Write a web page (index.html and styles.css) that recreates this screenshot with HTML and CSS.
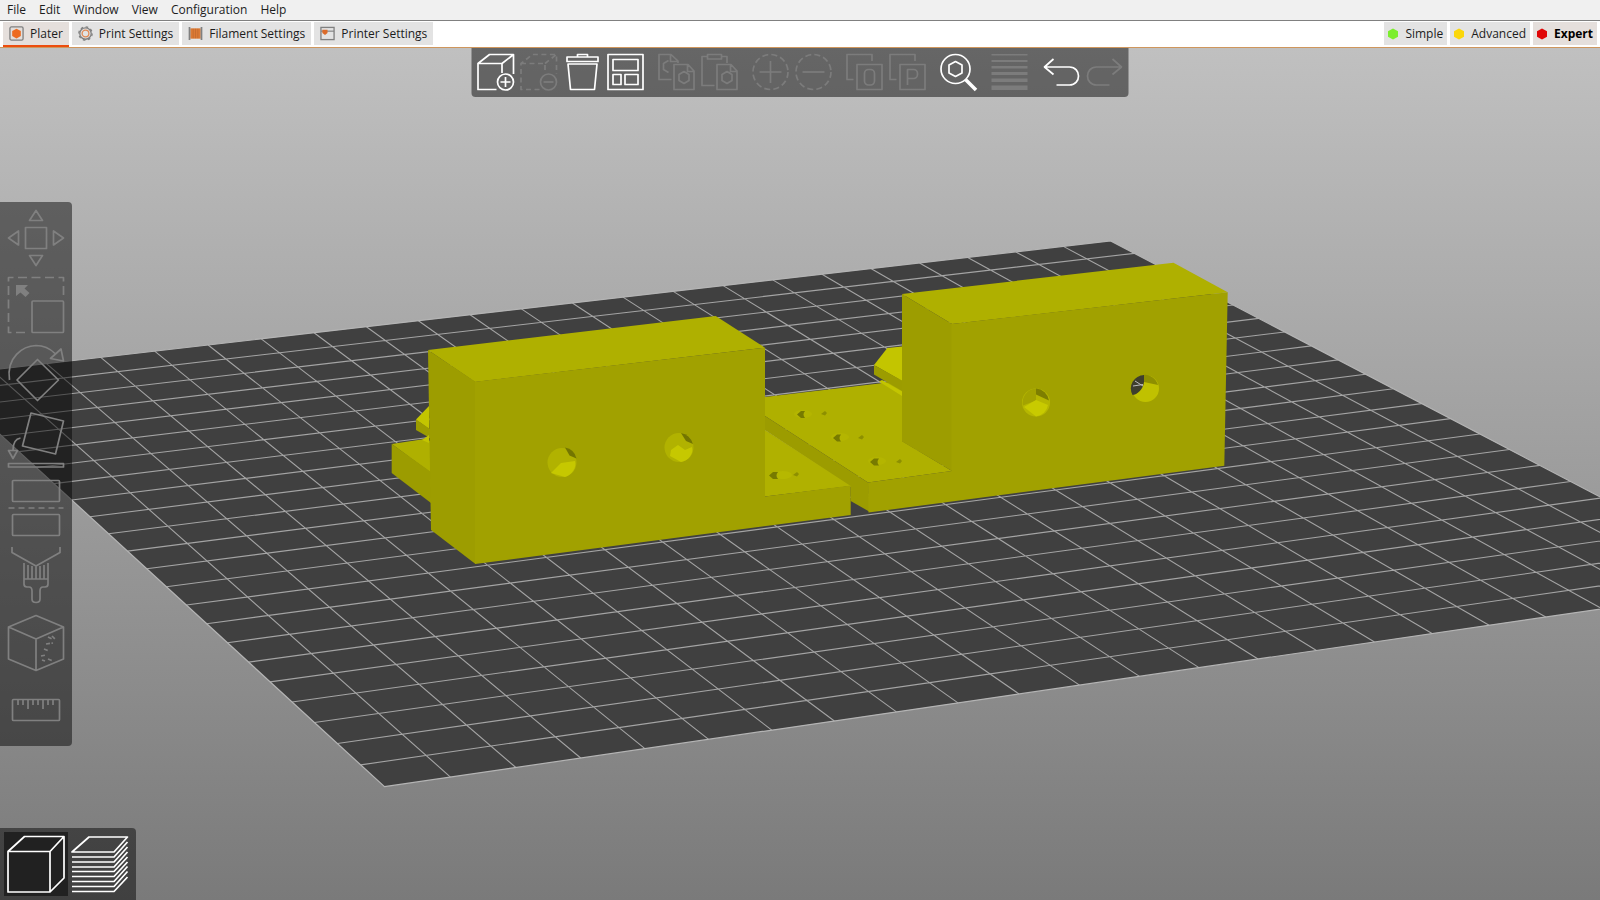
FILE: index.html
```html
<!DOCTYPE html>
<html lang="en">
<head>
<meta charset="utf-8">
<title>Plater</title>
<link rel="stylesheet" href="styles.css">
</head>
<body>
<div class="app">
  <nav class="menubar" aria-label="Main menu">
    <button>File</button><button>Edit</button><button>Window</button><button>View</button><button>Configuration</button><button>Help</button>
  </nav>

  <header class="tabbar">
    <div class="tabs">
      <button class="tab active"><svg viewBox="0 0 16 16"><rect x="1" y="1" width="14" height="14" rx="1.5" fill="#e3dedb" stroke="#808080" stroke-width="1.4"/><path d="M8 2.8 12.6 5.4v5.2L8 13.2 3.4 10.6V5.4z" fill="#ed6b21"/></svg>Plater</button>
      <button class="tab"><svg viewBox="0 0 16 16" fill="none"><circle cx="8" cy="8" r="6.1" stroke="#808080" stroke-width="1.4"/><circle cx="8" cy="8" r="7.1" stroke="#808080" stroke-width="1.4" stroke-dasharray="2.8 2.77"/><circle cx="8" cy="8" r="3.6" stroke="#e08a55" stroke-width="1.4"/></svg>Print Settings</button>
      <button class="tab"><svg viewBox="0 0 16 16"><path d="M2.5 2.5h11v11h-11z" fill="#dc7a35"/><path d="M5.5 3v10M8 3v10M10.5 3v10" stroke="#c0692d" stroke-width=".8"/><path d="M1.6 1v14M14.4 1v14" stroke="#808080" stroke-width="1.8"/></svg>Filament Settings</button>
      <button class="tab"><svg viewBox="0 0 16 16"><rect x="1" y="1.5" width="14" height="13" fill="none" stroke="#808080" stroke-width="1.4"/><path d="M1 5.5h14" stroke="#808080" stroke-width="1.2"/><path d="M2.500 4h5.500v3.500L5.300 9.500 2.500 7.500z" fill="#dc6b2a"/></svg>Printer Settings</button>
    </div>
    <div class="modes">
      <button class="mode"><svg viewBox="0 0 12 12"><path d="M6 .5 11 3.300v5.400L6 11.500 1 8.700V3.300z" fill="#7cee2e"/></svg>Simple</button>
      <button class="mode"><svg viewBox="0 0 12 12"><path d="M6 .5 11 3.300v5.400L6 11.500 1 8.700V3.300z" fill="#fbd70a"/></svg>Advanced</button>
      <button class="mode active"><svg viewBox="0 0 12 12"><path d="M6 .5 11 3.300v5.400L6 11.500 1 8.700V3.300z" fill="#e00606"/></svg>Expert</button>
    </div>
  </header>

  <main class="viewport">
    <svg class="scene" viewBox="0 48 1600 852" preserveAspectRatio="xMidYMid slice" role="img" aria-label="Print bed with two brackets">
      <path id="bed" fill="#404040"/>
      <path id="grid" fill="none" stroke="#a4a4a4" stroke-width="1.100"/>
      <path id="edge" fill="none" stroke="#b4b4b4" stroke-width="1.200"/>

      <g>
        <path fill="#afb000" d="M765 397 879 383.500 902 380 902 441 952 471 868 482.500 765 416z"/>
        <path fill="#9c9c00" d="M765 416 868 482.500 870 512 850.700 501 850.700 487 765 430z"/>
        <path fill="#c3c500" d="M874 365 887.300 348 902 346.500V381z"/>
        <path fill="#9c9c00" d="M874 365 902 380.500V391L874 374.500z"/>
        <path fill="#c3c500" d="M879 381.500 882 380 902 391.500V396z"/>
        <path fill="#afb000" d="M902 294 1173.500 262.700 1227.700 292.300 952 324z"/>
        <path fill="#9d9d00" d="M902 294 952 324V471L902 441.500z"/>
        <path fill="#a1a100" d="M951.500 324 1227.700 292.300 1224.300 465.700 868.500 512.500 868 482.500 951.500 471z"/>
        <path fill="#b4b500" d="M812 414a9 4 0 1 0 0 .1zM849 437a9 4 0 1 0 0 .1zM886 461a9 4 0 1 0 0 .1z"/>
        <path fill="#777a00" d="M797 414.500 801 411h4c-2 2-2 5 0 7h-4zM833 438 837 434.500h4c-2 2-2 5 0 7h-4zM870 462 874 458.500h5c-2 2-2 5 0 7h-5z"/>
        <path fill="#8d8f00" d="M821 414l4-3 2 2-2 2.500zM858 438l4-3 2 2-2 2.500zM896 462l4-3 2 2-2 2.500z"/>
      </g>
      <g>
        <circle cx="1036" cy="402.500" r="14" fill="#b6b700"/>
        <path fill="#7d7e00" d="M1036 388.500a14 14 0 0 1 13 12l-13-6z"/>
        <path fill="#a3a300" d="M1036 388.500v12l-13 5a14 14 0 0 1 13-17z"/>
        <path fill="#c8ca00" d="M1024 407l12-7 12 5a14 14 0 0 1-12 11.500z"/>
        <circle cx="1145.500" cy="388.500" r="13.500" fill="#c0c100"/>
        <path fill="#8e8f00" d="M1143 375a13.500 13.500 0 0 1 15 10l-14-3z"/>
        <path fill="#3e3e2e" d="M1144 375v7c-1 6-4 10-9 12.500l-2.500.5a13.500 13.500 0 0 1 11.500-20z"/>
        <path fill="none" stroke="#bcbcbc" stroke-width="1" d="M1133 386l10-1.500M1135 381l8 5"/>
      </g>

      <g>
        <path fill="#afb000" d="M391.700 444 423 439.300 431 441V473z"/>
        <path fill="#9c9c00" d="M391.700 444 431 472V503L391.700 473z"/>
        <path fill="#c3c500" d="M416 419.500 429 406V429z"/>
        <path fill="#9c9c00" d="M416 419.500 430 429V438L416 430z"/>
        <path fill="#c3c500" d="M422 440 429 435V443z"/>
        <path fill="#b0b100" d="M765 430 850.700 486 765 496.500z"/>
        <path fill="#afb000" d="M428 350 715.700 316 765 347.700 475 382z"/>
        <path fill="#9d9d00" d="M428 350 475.500 381.700V564L431 530z"/>
        <path fill="#a1a100" d="M475 381.700 765 347.700V496.500L850.700 485.500V515L475 564z"/>
        <path fill="#b6b800" d="M792 475a9 4 0 1 0 0 .1z"/>
        <path fill="#777a00" d="M769 475.500 773 472h5c-2 2-2 5 0 7h-5z"/>
        <path fill="#8d8f00" d="M793 475l4-3 2 2-2 2.500z"/>
        <circle cx="562" cy="462.500" r="14.500" fill="#b1b200"/>
        <path fill="#737500" d="M565 447.500a14.500 14.500 0 0 1 11.500 11l-7-3z"/>
        <path fill="#c6c800" d="M561 463l14-2c2 6-3 14-10 16l-14-4z"/>
        <circle cx="679" cy="447.500" r="14.500" fill="#b1b200"/>
        <path fill="#737500" d="M681 433a14.500 14.500 0 0 1 12 11l-7-3z"/>
        <path fill="#c6c800" d="M671 450l7-5 7 5 7-3c2 7-4 14-11 15l-11-6z"/>
      </g>
    </svg>

    <div class="toolbar">
      <div class="group">
        <button class="tool on" aria-label="Add"><svg viewBox="1 0 38 38"><path d="M20 36.500H1.500v-26L13 1.500h24V21M1.500 10.500h24V20M25.500 10.500 37 1.500"/><circle cx="29" cy="29" r="8"/><path d="M29 24v10M24 29h10"/></svg></button>
        <button class="tool" aria-label="Delete"><svg viewBox="1 0 38 38"><path stroke-dasharray="5 3.500" d="M20 36.500H1.500v-26L13 1.500h24V21M1.500 10.500h24V20M25.500 10.500 37 1.500"/><circle cx="29" cy="29" r="8"/><path d="M24 29h10"/></svg></button>
        <button class="tool on" aria-label="Delete all"><svg viewBox="0 0 38 38"><path d="M3.500 4h31v4.500h-31zM14 4V1.500h10V4M4.500 11 7 36.500h24L33.500 11z"/></svg></button>
        <button class="tool on" aria-label="Arrange"><svg viewBox="0 0 38 38"><path d="M1.500 1.500h35v35h-35zM6.500 6.500h25v11h-25zM6.500 21.500h8v10h-8zM18.500 21.500h13v10h-13z"/></svg></button>
      </div>
      <div class="group">
        <button class="tool" aria-label="Copy"><svg viewBox="0 0 38 38"><path d="M14 26.500H1.500v-25h12l7 6.500v2M13 2v6.500h7M11 19.500l-5-3v-6l5-3M16.500 11.500h14l6 6.500v18.500h-20zM30 12v6.500h6M26.500 18.500l5 3v6l-5 3-5-3v-6z"/></svg></button>
        <button class="tool" aria-label="Paste"><svg viewBox="0 0 38 38"><path d="M14 32.500H1.500v-29H7M21 3.500h5.500V10M7 1.500h14V6H7zM16.500 11.500h14l6 6.500v18.500h-20zM30 12v6.500h6M26.500 18.500l5 3v6l-5 3-5-3v-6z"/></svg></button>
      </div>
      <div class="group">
        <button class="tool" aria-label="Add instance"><svg viewBox="0 0 38 38"><circle cx="19" cy="19" r="17.500" stroke-dasharray="6 3.200"/><path d="M8 19h22M19 8v22"/></svg></button>
        <button class="tool" aria-label="Remove instance"><svg viewBox="0 0 38 38"><circle cx="19" cy="19" r="17.500" stroke-dasharray="6 3.200"/><path d="M8 19h22"/></svg></button>
      </div>
      <div class="group">
        <button class="tool" aria-label="Split to objects"><svg viewBox="0 0 38 38"><path d="M8 26.500H1.500v-25h25V8M11.500 11.500h25v25h-25z"/><rect x="19" y="16.500" width="10" height="15.500" rx="4"/></svg></button>
        <button class="tool" aria-label="Split to parts"><svg viewBox="0 0 38 38"><path d="M8 26.500H1.500v-25h25V8M11.500 11.500h25v25h-25zM19 32V16.500h6a4 4 0 0 1 4 4v1a4 4 0 0 1-4 4h-6"/></svg></button>
      </div>
      <div class="group">
        <button class="tool on" aria-label="Search"><svg viewBox="0 0 38 38"><circle cx="16" cy="16" r="14.500"/><path d="M16 8.500 22.500 12v8L16 23.500 9.500 20v-8z"/><path d="M26 26.500 36.500 37" stroke-width="3.500"/></svg></button>
      </div>
      <div class="group">
        <button class="tool" aria-label="Variable layer height"><svg viewBox="0 0 38 38"><path class="solid" d="M1 1h36v1.500H1zM1 7h36v2H1zM1 13h36v2.500H1zM1 19h36v3H1zM1 25.500h36V29H1zM1 32.500h36v4.500H1z"/></svg></button>
      </div>
      <div class="group">
        <button class="tool on" aria-label="Undo"><svg viewBox="-1 0 38 38"><path d="M11 6 2 14l9 7.500M2 14h25c12 0 12 18 0 18H14"/></svg></button>
        <button class="tool" aria-label="Redo"><svg viewBox="-1 0 38 38"><path d="M27 6l9 8-9 7.500M36 14H11c-12 0-12 18 0 18h13"/></svg></button>
      </div>
    </div>

    <div class="gizmos">
      <button class="gizmo" aria-label="Move"><svg viewBox="0 0 56 56"><path d="M17.500 17.500h21v21h-21zM28 .5l6.500 10h-13zM28 55.500l6.500-10h-13zM.5 28l10-7v14zM55.500 28l-10-7v14z"/></svg></button>
      <button class="gizmo" aria-label="Scale"><svg viewBox="0 0 56 56"><path d="M55.500 18V.5H.5v55H20" stroke-dasharray="9 4.500"/><rect x="24" y="24" width="31.500" height="31.500" rx="1"/><path class="solid" d="M8 8h12l-3.500 3.500 5 4.500-4 4-5-4.500L8 19z"/></svg></button>
      <button class="gizmo" aria-label="Rotate"><svg viewBox="0 0 56 56"><path d="M1.500 35C-2 12 15 1 28 .500c8 0 14 3 19 8M53 4l2.500 12-13-2.500zM29.500 14.500 50.500 35 29.500 55.500 9 35z"/></svg></button>
      <button class="gizmo" aria-label="Place on face"><svg viewBox="0 0 56 56"><path d="M23 1l32.500 8-8 33L14.500 34zM12.500 26C7 27 5 32 5 38M.5 38.500h9L5 46.500zM.5 51.500h55v3.500h-55z"/></svg></button>
      <button class="gizmo" aria-label="Cut"><svg viewBox="0 0 56 56"><rect x="4.500" y=".5" width="47" height="21" rx="1"/><path d="M.5 28h55" stroke-dasharray="6 4"/><rect x="4.500" y="34.500" width="47" height="21" rx="1"/></svg></button>
      <button class="gizmo" aria-label="Paint-on supports"><svg viewBox="0 0 56 56"><path d="M4 0v5.500L28 19 52 5.500V0M16 16v21q0 3 3 3h2q3 0 3 4v8q0 3.500 4 3.500t4-3.500v-8q0-4 3-4h2q3 0 3-3V16M16 32h24M20 18v14M24 19v13M28 19v13M32 19v13M36 18v14"/></svg></button>
      <button class="gizmo" aria-label="Seam painting"><svg viewBox="0 0 56 56"><path d="M28 .5 55.500 12v32L28 55.500.5 44V12zM.5 12 28 24l27.500-12M28 24v31.500"/><path d="M40 22l4 2M44 21l3 3M38 29l7-1M36 34l5 2M33 41l5-1M40 44l5 2M34 45l3 1" stroke-dasharray="4 1.500"/></svg></button>
      <button class="gizmo" aria-label="Measure"><svg viewBox="0 0 56 56"><rect x="4.500" y="17.500" width="47" height="21" rx="1"/><path d="M10 18v5M15 18v5M20 18v9M25 18v5M30 18v5M35 18v9M40 18v5M45 18v5"/></svg></button>
    </div>

    <div class="views">
      <button class="view active" aria-label="3D editor view"><svg viewBox="0 0 56 56"><path d="M0 15.500 16.500 .5H56V42L42 56H0zM0 15.500h42V56M42 15.500 56 .5"/></svg></button>
      <button class="view" aria-label="Preview"><svg viewBox="0 0 56 56"><path d="M0 16 17 1h38.500L42 16zM0 21h42L55.500 6M0 26h42l13.500-15M0 31h42l13.500-15M0 35.500h42L55.500 21M0 40.500h42L55.500 26M0 45.500h42l13.500-15M0 50.500h42l13.500-15M0 55.500h42L55.500 41"/></svg></button>
    </div>
  </main>
</div>
<script src="scene.js"></script>
</body>
</html>
```
FILE: styles.css
```css
* { box-sizing: border-box; }
body { margin: 0; font-family: "Open Sans", "Noto Sans", sans-serif; font-size: 12px; line-height: 16px; color: #1c1c1c; }
button { font: inherit; color: inherit; border: 0; margin: 0; padding: 0; background: none; }
svg { display: block; }

.app { display: flex; flex-direction: column; height: 100vh; overflow: hidden; }

.menubar { display: flex; gap: 13px; height: 21px; padding: 0 7px; background: #f0f0f0; border-bottom: 1px solid #808080; }

.tabbar { display: flex; justify-content: space-between; height: 27px; padding: 1px 3px 0; background: #fff; border-bottom: 1px solid #cf965c; }
.tabs, .modes { display: flex; gap: 3px; align-items: flex-start; }
.tab, .mode { display: flex; align-items: center; height: 23px; background: #e3e3e3; }
.tab { gap: 6px; padding: 0 6px; }
.tab svg { width: 15px; height: 15px; }
.tab.active { height: 25px; background: #e5dfdc; border-bottom: 2px solid #ed4d0e; }
.mode { gap: 6px; padding: 0 4px 0 3px; }
.mode svg { width: 12px; height: 12px; }
.mode.active { background: #e5dfdc; color: #000; font-weight: 700; }

.viewport { position: relative; flex: 1; min-height: 0; display: flex; align-items: center; background: linear-gradient(#c0c0c0, #7a7a7a); }
.scene { position: absolute; inset: 0; width: 100%; height: 100%; }

.toolbar, .gizmos, .views { background: rgba(0, 0, 0, .47); }
.toolbar svg, .gizmos svg, .views svg { width: 100%; height: 100%; overflow: visible; fill: none; stroke: currentColor; stroke-width: 1.7; stroke-linejoin: round; }
.toolbar .solid, .gizmos .solid { fill: currentColor; stroke: none; }

.toolbar { position: absolute; top: 0; left: 50%; transform: translateX(-50%); display: flex; gap: 13px; padding: 5px 6px 6px; border-radius: 0 0 4px 4px; }
.group { display: flex; gap: 5px; }
.tool { width: 38px; height: 38px; color: #7c7c7c; }
.tool.on { color: #fff; }

.gizmos { position: relative; display: flex; flex-direction: column; justify-content: space-between; min-height: 544px; padding: 8px; border-radius: 0 4px 4px 0; }
.gizmo { width: 56px; height: 56px; color: #808080; }

.views { position: absolute; left: 0; bottom: 0; display: flex; padding: 4px; border-radius: 0 4px 0 0; }
.view { width: 64px; height: 64px; padding: 4px; color: #fff; }
.view.active { background: #212121; }
```
FILE: scene.js
```js
// Projects the print bed, measured in grid cells, onto the viewport.
const CELLS = 23;
const near = [384.5, 786.7];
const vanishU = [15358, -1402];
const vanishV = [-1966, -1368];
const depthU = 0.004425;
const depthV = 0.01023;

function project(u, v) {
  const w = 1 + depthU * u + depthV * v;
  return [0, 1].map(i =>
    ((near[i] + vanishU[i] * depthU * u + vanishV[i] * depthV * v) / w).toFixed(2)
  ).join(" ");
}

const outline = `M${project(0, 0)}L${project(CELLS, 0)}L${project(CELLS, CELLS)}L${project(0, CELLS)}z`;
let lines = "";
for (let i = 1; i < CELLS; i++) {
  lines += `M${project(i, 0)}L${project(i, CELLS)}M${project(0, i)}L${project(CELLS, i)}`;
}
document.getElementById("bed").setAttribute("d", outline);
document.getElementById("edge").setAttribute("d", outline);
document.getElementById("grid").setAttribute("d", lines);
```
